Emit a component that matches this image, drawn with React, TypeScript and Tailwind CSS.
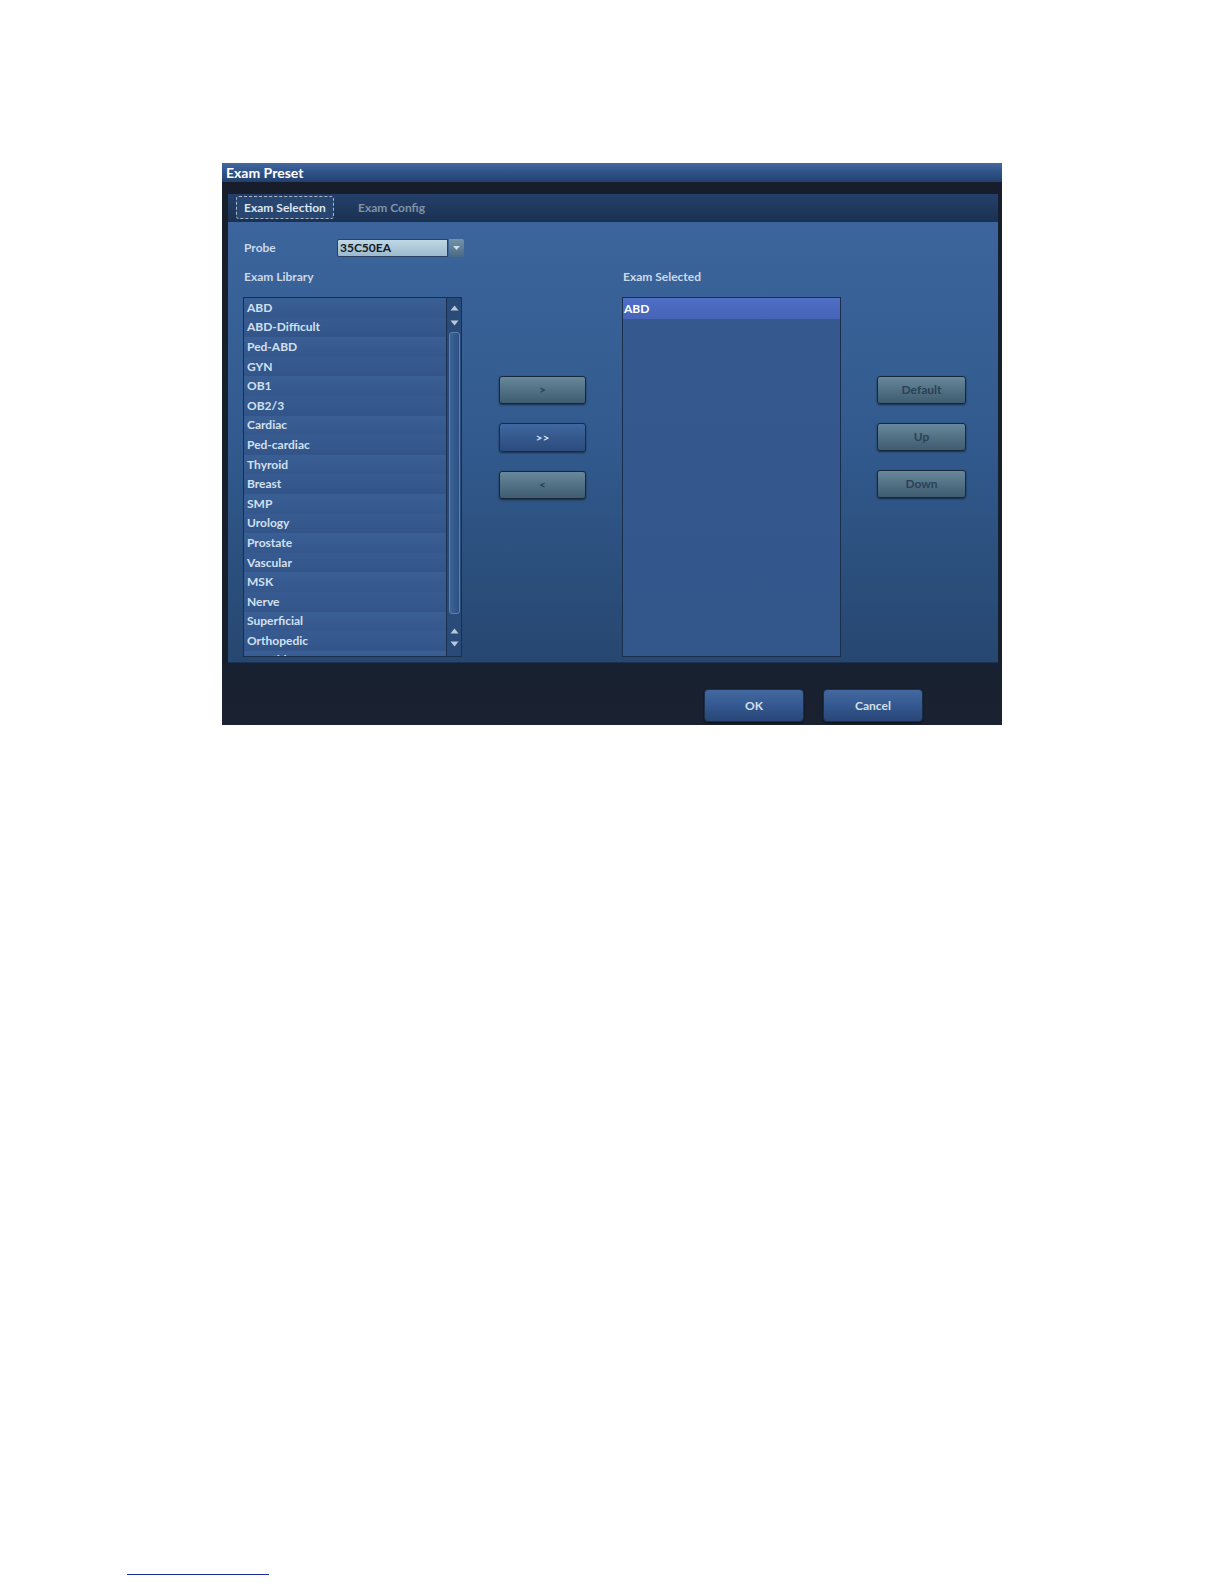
import React from "react";

const library = [
  "ABD",
  "ABD-Difficult",
  "Ped-ABD",
  "GYN",
  "OB1",
  "OB2/3",
  "Cardiac",
  "Ped-cardiac",
  "Thyroid",
  "Breast",
  "SMP",
  "Urology",
  "Prostate",
  "Vascular",
  "MSK",
  "Nerve",
  "Superficial",
  "Orthopedic",
  "Carotid",
];

function Tri({ up }: { up?: boolean }) {
  return (
    <svg width="9" height="6" viewBox="0 0 9 6" className="block">
      {up ? (
        <path d="M0.5 5.5 L4.5 0.5 L8.5 5.5 Z" fill="#b7c8d6" />
      ) : (
        <path d="M0.5 0.5 L4.5 5.5 L8.5 0.5 Z" fill="#b7c8d6" />
      )}
    </svg>
  );
}

function GrayBtn({ label }: { label: string }) {
  return (
    <div className="h-[28px] w-full rounded-[3px] border border-[#18283a] bg-gradient-to-b from-[#68889b] via-[#527184] to-[#3f5c71] shadow-[0_1px_2px_rgba(0,0,0,0.5)] flex items-center justify-center text-[12px] font-bold text-[#2a4256]">
      {label}
    </div>
  );
}

function BlueBtn({ label }: { label: string }) {
  return (
    <div className="h-[29px] w-full rounded-[3px] border border-[#1a2d48] bg-gradient-to-b from-[#4268a0] via-[#35598e] to-[#2b4b7c] shadow-[0_1px_2px_rgba(0,0,0,0.5)] flex items-center justify-center text-[12px] font-bold text-[#d2deec]">
      {label}
    </div>
  );
}

export default function App() {
  return (
    <div className="w-[1224px] h-[1584px] bg-white flex flex-col font-['Lato','Open_Sans',sans-serif]">
      <div className="mt-[163px] ml-[222px] w-[780px] h-[562px] flex flex-col bg-[#171e2c]">
        {/* title bar */}
        <div className="h-[19px] bg-gradient-to-b from-[#4368a0] via-[#2f5286] to-[#22406e] flex items-center pl-[4px] text-[14px] font-bold text-white leading-none">
          Exam Preset
        </div>
        {/* dark band */}
        <div className="h-[12px] bg-[#171d2a]" />
        {/* tab bar */}
        <div className="h-[28px] ml-[6px] mr-[4px] bg-gradient-to-b from-[#24406a] to-[#1b3152] flex items-end pl-[8px]">
          <div className="h-[23px] w-[98px] mb-[3px] rounded-[3px] border border-dashed border-[#a8b8c8] bg-[#28466f] flex items-center justify-center text-[12px] font-bold text-[#dbe6f1]">
            Exam Selection
          </div>
          <div className="h-[23px] mb-[3px] ml-[24px] flex items-center text-[12px] font-bold text-[#7f93aa]">
            Exam Config
          </div>
        </div>
        {/* panel */}
        <div className="h-[441px] ml-[6px] mr-[4px] bg-gradient-to-b from-[#3b659c] via-[#325a8e] to-[#264770] border-b border-[#1c3150] pl-[15px] pt-[17px] flex flex-col">
          {/* probe row */}
          <div className="h-[18px] flex items-center">
            <div className="w-[94px] pl-[1px] text-[12px] font-bold text-[#cbd9e8]">Probe</div>
            <div className="h-[18px] w-[111px] rounded-l-[2px] border border-[#2a4260] bg-gradient-to-b from-[#c0d7e4] to-[#9cbacd] flex items-center pl-[2px] text-[12px] font-bold text-[#121a24]">
              35C50EA
            </div>
            <div className="h-[18px] w-[15px] ml-[1px] rounded-r-[2px] bg-gradient-to-b from-[#7393aa] to-[#4a6a84] flex items-center justify-center">
              <svg width="7" height="4" viewBox="0 0 7 4">
                <path d="M0 0 L3.5 4 L7 0 Z" fill="#d0dce6" />
              </svg>
            </div>
          </div>
          {/* main row */}
          <div className="mt-[12px] flex">
            {/* library column */}
            <div className="w-[219px] flex flex-col">
              <div className="h-[16px] pl-[1px] text-[12px] font-bold text-[#cbd9e8] leading-[16px]">Exam Library</div>
              <div className="mt-[12px] h-[360px] flex border border-[#1b2e4c] bg-[#34588d]">
                <div className="flex-1 overflow-hidden flex flex-col">
                  {library.map((item, i) => (
                    <div
                      key={item}
                      className={`h-[19.6px] shrink-0 pl-[3px] flex items-center text-[12px] font-bold text-[#d3e0ee] bg-gradient-to-b ${
                        i % 2 === 0 ? "from-[#3a5f95] to-[#34578c]" : "from-[#375b91] to-[#325489]"
                      }`}
                    >
                      {item}
                    </div>
                  ))}
                </div>
                <div className="w-[15px] border-l border-[#1b2e4c] bg-[#2a4a77] flex flex-col items-center">
                  <div className="mt-[7px]"><Tri up /></div>
                  <div className="mt-[9px]"><Tri /></div>
                  <div className="mt-[6px] h-[282px] w-[11px] rounded-[3px] border border-[#5a82b0] bg-gradient-to-r from-[#3d6597] to-[#2c5083]" />
                  <div className="mt-[14px]"><Tri up /></div>
                  <div className="mt-[7px]"><Tri /></div>
                </div>
              </div>
            </div>
            {/* middle buttons */}
            <div className="ml-[37px] w-[87px] pt-[107px] flex flex-col gap-[19px]">
              <GrayBtn label=">" />
              <BlueBtn label=">>" />
              <GrayBtn label="<" />
            </div>
            {/* selected column */}
            <div className="ml-[36px] w-[219px] flex flex-col">
              <div className="h-[16px] pl-[1px] text-[12px] font-bold text-[#cbd9e8] leading-[16px]">Exam Selected</div>
              <div className="mt-[12px] h-[360px] border border-[#1b2e4c] bg-gradient-to-b from-[#35598f] to-[#33578b] flex flex-col">
                <div className="h-[21px] pl-[1px] flex items-center bg-gradient-to-b from-[#4f6ec4] to-[#4665b8] text-[12px] font-bold text-white">
                  ABD
                </div>
              </div>
            </div>
            {/* right buttons */}
            <div className="ml-[36px] w-[89px] pt-[107px] flex flex-col gap-[19px]">
              <GrayBtn label="Default" />
              <GrayBtn label="Up" />
              <GrayBtn label="Down" />
            </div>
          </div>
        </div>
        {/* footer */}
        <div className="flex-1 flex items-end justify-start pl-[482px] pb-[3px] gap-[19px] bg-gradient-to-b from-[#182131] to-[#1a2230]">
          <div className="w-[100px] h-[33px] rounded-[4px] border border-[#1c2f4a] bg-gradient-to-b from-[#4369a0] via-[#345890] to-[#284677] shadow-[0_1px_2px_rgba(0,0,0,0.6)] flex items-center justify-center text-[12px] font-bold text-[#d6e0ec]">
            OK
          </div>
          <div className="w-[100px] h-[33px] rounded-[4px] border border-[#1c2f4a] bg-gradient-to-b from-[#4369a0] via-[#345890] to-[#284677] shadow-[0_1px_2px_rgba(0,0,0,0.6)] flex items-center justify-center text-[12px] font-bold text-[#d6e0ec]">
            Cancel
          </div>
        </div>
      </div>
      <div className="mt-[849px] ml-[127px] w-[142px] h-px bg-[#1b2a9c]" />
    </div>
  );
}
